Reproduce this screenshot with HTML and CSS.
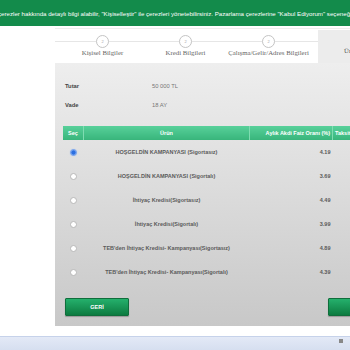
FILE: index.html
```
<!DOCTYPE html>
<html lang="tr">
<head>
    <meta charset="UTF-8">
    <meta name="viewport" content="width=device-width, initial-scale=1.0">
    <title>Kredi Başvurusu - Ürün Bilgileri</title>
    <link rel="stylesheet" href="styles.css">
</head>
<body>
    <div class="cookie-bar">
        <p>çerezler hakkında detaylı bilgi alabilir, "Kişiselleştir" ile çerezleri yönetebilirsiniz. Pazarlama çerezlerine "Kabul Ediyorum" seçeneği ile de izin verebilirsiniz.</p>
    </div>

    <div class="wizard">
        <div class="steps">
            <div class="step">
                <span class="step-num">2</span>
                <span class="step-label">Kişisel Bilgiler</span>
            </div>
            <div class="step">
                <span class="step-num">2</span>
                <span class="step-label">Kredi Bilgileri</span>
            </div>
            <div class="step">
                <span class="step-num">2</span>
                <span class="step-label">Çalışma/Gelir/Adres Bilgileri</span>
            </div>
            <div class="step step-active">
                <span class="step-label">Ürün Bilgileri</span>
            </div>
        </div>

        <div class="panel">
            <div class="summary">
                <div class="summary-row">
                    <span class="summary-key">Tutar</span>
                    <span class="summary-val">50 000 TL</span>
                </div>
                <div class="summary-row">
                    <span class="summary-key">Vade</span>
                    <span class="summary-val">18 AY</span>
                </div>
            </div>

            <table class="products">
                <thead>
                    <tr>
                        <th class="col-sel">Seç</th>
                        <th class="col-name">Ürün</th>
                        <th class="col-rate">Aylık Akdi Faiz Oranı (%)</th>
                        <th class="col-more">Taksit Tutarı</th>
                    </tr>
                </thead>
                <tbody>
                    <tr>
                        <td class="col-sel"><span class="radio checked"></span></td>
                        <td class="col-name">HOŞGELDİN KAMPANYASI (Sigortasız)</td>
                        <td class="col-rate">4.19</td>
                        <td class="col-more"></td>
                    </tr>
                    <tr>
                        <td class="col-sel"><span class="radio"></span></td>
                        <td class="col-name">HOŞGELDİN KAMPANYASI (Sigortalı)</td>
                        <td class="col-rate">3.69</td>
                        <td class="col-more"></td>
                    </tr>
                    <tr>
                        <td class="col-sel"><span class="radio"></span></td>
                        <td class="col-name">İhtiyaç Kredisi(Sigortasız)</td>
                        <td class="col-rate">4.49</td>
                        <td class="col-more"></td>
                    </tr>
                    <tr>
                        <td class="col-sel"><span class="radio"></span></td>
                        <td class="col-name">İhtiyaç Kredisi(Sigortalı)</td>
                        <td class="col-rate">3.99</td>
                        <td class="col-more"></td>
                    </tr>
                    <tr>
                        <td class="col-sel"><span class="radio"></span></td>
                        <td class="col-name">TEB'den İhtiyaç Kredisi- Kampanyası(Sigortasız)</td>
                        <td class="col-rate">4.89</td>
                        <td class="col-more"></td>
                    </tr>
                    <tr>
                        <td class="col-sel"><span class="radio"></span></td>
                        <td class="col-name">TEB'den İhtiyaç Kredisi- Kampanyası(Sigortalı)</td>
                        <td class="col-rate">4.39</td>
                        <td class="col-more"></td>
                    </tr>
                </tbody>
            </table>

            <div class="actions">
                <button class="btn">GERİ</button>
                <button class="btn">İLERİ</button>
            </div>
        </div>
    </div>

    <div class="taskbar"><span class="taskbar-icon"></span></div>
</body>
</html>
```

FILE: styles.css
```
html, body {
    margin: 0;
    padding: 0;
    width: 350px;
    height: 350px;
    overflow: hidden;
}
body {
    font-family: 'Liberation Sans', Arial, sans-serif;
    background: #fff;
    color: #555;
    position: relative;
}

/* cookie notice */
.cookie-bar {
    height: 26px;
    background: #138b4b;
    color: #fff;
    font-size: 6.15px;
    white-space: nowrap;
    overflow: hidden;
    display: flex;
    align-items: center;
}
.cookie-bar p {
    margin: 0 0 0 -2px;
}

/* wizard */
.wizard {
    margin: 2px 0 0 55px;
    width: 340px;
}
.steps {
    display: flex;
    height: 34px;
    border-top: 1px solid #eee;
    padding-left: 6px;
    background: linear-gradient(#fff 12px, #e6e6e6 12px, #e6e6e6 13px, #fff 13px);
}
.step {
    width: 83px;
    display: flex;
    flex-direction: column;
    align-items: center;
    padding-top: 6px;
}
.step-num {
    width: 11px;
    height: 11px;
    border: 1px solid #c4c4c4;
    border-radius: 50%;
    background: #fff;
    color: #aaa;
    font-size: 4px;
    line-height: 11px;
    text-align: center;
}
.step-label {
    margin-top: 1px;
    font-family: 'Liberation Serif', 'DejaVu Serif', serif;
    font-size: 6.8px;
    color: #666;
    white-space: nowrap;
}
.step-active {
    flex: 1;
    margin: 1px 0 0 8px;
    background: #ececec;
    align-items: flex-start;
    padding: 17px 0 0 26px;
}
.step-active .step-label {
    margin-top: 0;
    color: #555;
}

/* grey panel */
.panel {
    height: 263px;
    background: linear-gradient(#eeeeee, #c8c8c8);
    padding: 10px 0 0 8px;
    box-sizing: border-box;
}
.summary {
    padding: 3px 0 0 2px;
}
.summary-row {
    display: flex;
    height: 19px;
    align-items: center;
    font-size: 5.8px;
}
.summary-key {
    width: 87px;
    font-weight: bold;
    color: #444;
}
.summary-val {
    color: #777;
}

/* product table */
.products {
    margin-top: 12px;
    border-collapse: collapse;
    font-size: 5.5px;
    width: 320px;
    table-layout: fixed;
}
.products th {
    height: 14px;
    padding: 0 2px;
    color: #fff;
    font-weight: bold;
    background: linear-gradient(#58d09a, #38b57b);
    border-left: 1px solid #7fdcb1;
    white-space: nowrap;
    overflow: hidden;
}
.products th:first-child {
    border-left: none;
}
.products td {
    height: 24px;
    padding: 0 2px;
    color: #5a5a5a;
    font-weight: bold;
    text-align: center;
    white-space: nowrap;
}
.col-sel {
    width: 16px;
}
.col-name {
    width: 161px;
}
.col-rate {
    width: 78px;
    text-align: right !important;
}
.col-more {
    text-align: left !important;
}
.radio {
    display: inline-block;
    width: 5px;
    height: 5px;
    border: 1px solid #b8b8b8;
    border-radius: 50%;
    background: #fff;
    vertical-align: middle;
}
.radio.checked {
    background: radial-gradient(#2d6fe0 45%, #6a9cef 70%);
    border-color: #7da7ee;
    box-shadow: 0 0 1px #9bbcf3;
}

/* buttons */
.actions {
    display: flex;
    gap: 199px;
    margin-top: 14px;
    padding-left: 2px;
}
.btn {
    width: 64px;
    height: 18px;
    border: 1px solid #0f6e3b;
    border-radius: 1px;
    background: linear-gradient(#25b06c, #0c7b40);
    color: #fff;
    font-family: 'Liberation Sans', Arial, sans-serif;
    font-size: 5.5px;
    font-weight: bold;
    padding: 0;
    box-shadow: 0 1px 1px rgba(0, 0, 0, 0.25);
}

/* browser taskbar strip */
.taskbar {
    position: absolute;
    left: 0;
    right: 0;
    bottom: 0;
    height: 13px;
    background: linear-gradient(#e3e9f6, #d6dff0);
    border-top: 1px solid #c6d2ea;
}
.taskbar-icon {
    position: absolute;
    right: 7px;
    top: 2px;
    width: 4px;
    height: 4px;
    background: #888;
}
```
